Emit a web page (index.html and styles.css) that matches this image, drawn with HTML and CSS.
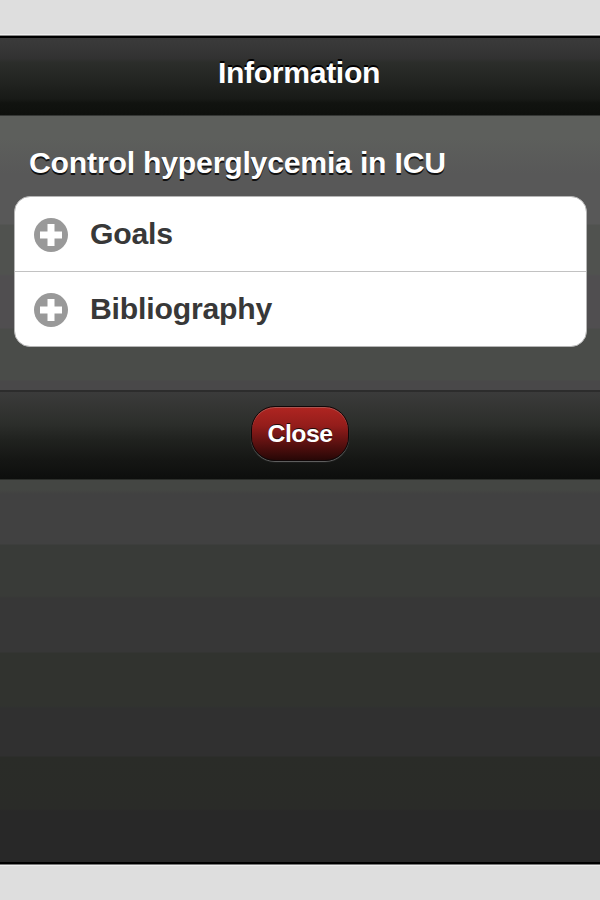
FILE: index.html
```html
<!DOCTYPE html>
<html lang="en">
<head>
<meta charset="utf-8">
<title>Information</title>
<link rel="stylesheet" href="styles.css">
</head>
<body>
<main class="dialog">
  <header class="bar header"><h1>Information</h1></header>
  <section class="content">
    <h2>Control hyperglycemia in ICU</h2>
    <ul class="list">
      <li>
        <svg class="icon" viewBox="0 0 34 34"><circle cx="17" cy="17" r="17"/><path d="M6 17h22M17 6v22"/></svg>
        <span>Goals</span>
      </li>
      <li>
        <svg class="icon" viewBox="0 0 34 34"><circle cx="17" cy="17" r="17"/><path d="M6 17h22M17 6v22"/></svg>
        <span>Bibliography</span>
      </li>
    </ul>
  </section>
  <footer class="bar footer"><button class="close" type="button">Close</button></footer>
</main>
</body>
</html>
```

FILE: styles.css
```css
* { box-sizing: border-box; margin: 0; padding: 0; }
body {
  height: 900px;
  padding-top: 35px;
  overflow: hidden;
  background: #dedede;
  font-family: "Liberation Sans", Arial, sans-serif;
  font-weight: bold;
}
.dialog {
  height: 829px;
  border-top: 1px solid #888;
  border-bottom: 2px solid #000;
  background: linear-gradient(#5d5f5c 0 102px, #585858 138px, #585858 188px, #50524f 189px, #50524f 238px, #504e50 240px, #504e50 292px, #4a4c49 293px, #4a4c49 344px, #494849 345px, #494849 400px, #444643 445px, #444643 454px, #414141 458px, #414141 508px, #393b38 509px, #393b38 560px, #373737 562px, #373737 616px, #31332f 617px, #31332f 670px, #303030 672px, #303030 720px, #2a2c28 721px, #2a2b28 773px, #282828 775px);
  box-shadow: 0 1px #777, 0 2px #eee, 0 -1px #eee;
}
.bar { display: flex; justify-content: center; }
.header {
  height: 80px;
  padding-top: 18px;
  border-top: 2px solid #000;
  border-bottom: 1px solid #353735;
  background: linear-gradient(#3b3b3b, #323232 20px, #2b2d2a 25px, #20221f 47px, #181a17 61px, #111310 65px, #0e100d);
}
h1 { color: #fff; font-size: 30.2px; line-height: 34px; letter-spacing: -.35px; margin-right: 2px; text-shadow: 0 -2px #000; }
.content { height: 274px; padding: 30px 13px 0 14px; }
h2 {
  height: 50px;
  padding-left: 15px;
  color: #fff;
  font-size: 30.2px;
  line-height: 34px;
  letter-spacing: -.21px;
  text-shadow: 0 2px #111;
}
.list {
  height: 151px;
  list-style: none;
  border: 1px solid #b5b5b5;
  border-radius: 16px;
  background: #fff;
}
.list li { display: flex; height: 75px; align-items: center; padding: 2px 0 0 19px; color: #383838; font-size: 30.2px; letter-spacing: -.2px; }
.list li:first-child { border-bottom: 1px solid #c2c2c2; }
.list li:last-child { height: 74px; padding-top: 1px; }
.list span { margin-left: 22px; line-height: 34px; position: relative; top: -1px; }
.icon { width: 34px; height: 34px; fill: #999; stroke: #fff; stroke-width: 7; }
.icon circle { stroke: none; }
.footer {
  height: 90px;
  padding-top: 14px;
  border-top: 2px solid #2c2c2c;
  border-bottom: 1px solid #2c2e2b;
  background: linear-gradient(#3b3b3b, #2c2e2b 32px, #20221f 48px, #151614 68px, #0d0e0d);
}
.close {
  width: 98px;
  height: 55px;
  padding-top: 1px;
  border: 1px solid #100708;
  border-radius: 24px;
  background: linear-gradient(#b02521, #941d1b 35%, #5c1110 68%, #270706);
  box-shadow: inset 0 1px #ad5550, 0 1px 1px #666;
  color: #fff;
  font: bold 24.8px/34px "Liberation Sans", Arial, sans-serif;
  letter-spacing: -.5px;
  text-shadow: 0 -1px #210b0b;
}
```
